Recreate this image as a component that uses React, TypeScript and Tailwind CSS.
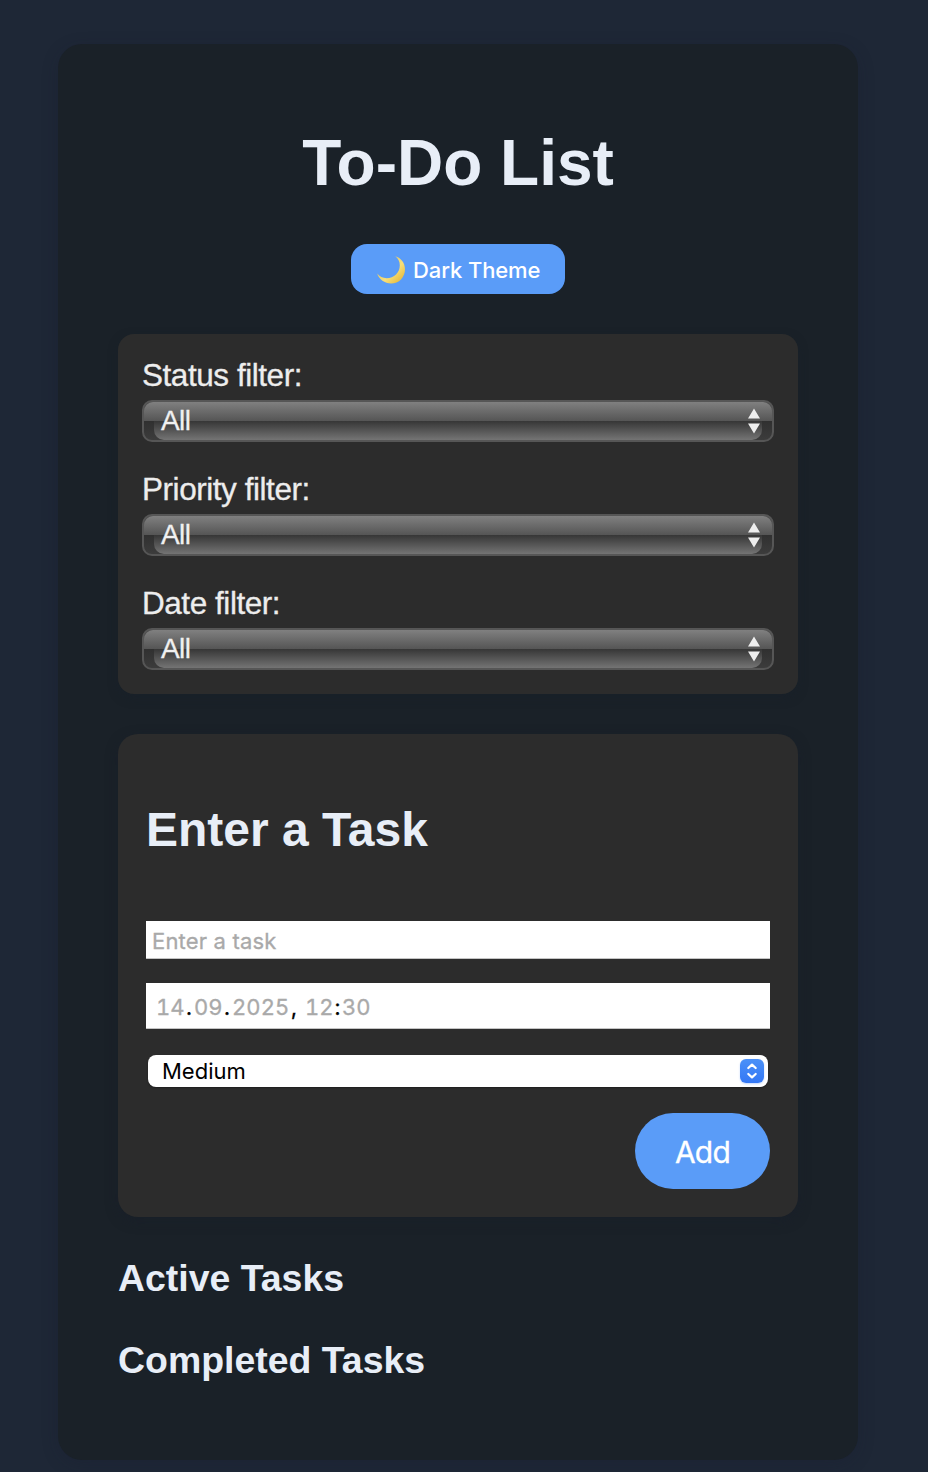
function Moon() {
  return (
    <svg className="h-[30px] w-[30px] shrink-0" viewBox="0 0 30 30">
      <defs>
        <linearGradient id="moon" x1="0" y1="0.2" x2="0.8" y2="1">
          <stop offset="0" stopColor="#d9bd62" />
          <stop offset="0.6" stopColor="#f7df79" />
          <stop offset="1" stopColor="#e5b93c" />
        </linearGradient>
      </defs>
      <path
        d="M19.2 2.2C25 3.8 29 8.9 29 15.2C29 23.2 23 29.5 15.2 29.5C8.7 29.5 3 25.6 1.2 19.6C3.6 22.6 6.8 24.2 10.6 24.2C18.2 24.2 23.8 18.6 23.8 11.2C23.8 7.5 22.2 4.4 19.2 2.2Z"
        fill="url(#moon)"
      />
    </svg>
  );
}

function FilterSelect({ label }: { label: string }) {
  return (
    <div className="flex h-[90px] flex-col">
      <span className="mt-[5px] h-[43px] text-[31.5px] leading-[36px] tracking-[-0.45px] text-[#ededed] [-webkit-text-stroke:0.3px_#ededed]">{label}</span>
      <button
        type="button"
        className="h-[42px] w-full shrink-0 rounded-[10px] border-2 border-[#565656] bg-[linear-gradient(to_bottom,#4b4b4b_0%,#404040_48%,#303030_50%,#3c3c3c_100%)] text-left"
      >
        <span className="relative flex h-full items-center justify-between rounded-t-[8px] pl-[17px] pr-3">
          <span className="absolute inset-x-0 top-0 h-[19px] rounded-t-[9px] bg-[linear-gradient(to_bottom,#808080,#555555)]" />
          <span className="absolute inset-x-[10px] bottom-0 top-[19px] rounded-b-[10px] bg-[linear-gradient(to_bottom,#363636,#747474)]" />
          <span className="relative text-[28px] leading-[30px] tracking-[-0.6px] text-[#f0f0f0] [-webkit-text-stroke:0.3px_#f0f0f0]">All</span>
          <svg className="relative -mt-px h-[26px] w-3" viewBox="0 0 12 26">
            <path d="M6 0.5L12 10.5H0ZM0 15.5H12L6 25.5Z" fill="#eeeeee" />
          </svg>
        </span>
      </button>
    </div>
  );
}

export default function App() {
  return (
    <div className="h-[1472px] w-[928px] overflow-hidden bg-[#1e2736] pl-[58px] pt-11 font-['Liberation_Sans',Arial,sans-serif]">
      <main className="flex h-[1416px] w-[800px] flex-col rounded-[24px] bg-[#1a2128] px-[60px] shadow-[0_4px_16px_rgba(24,29,48,0.25)]">
        <h1 className="mt-[82px] text-center text-[64px] font-bold leading-[74px] text-[#e8eef7]">To-Do List</h1>
        <button
          type="button"
          className="mt-11 flex h-[50px] w-[214px] shrink-0 items-center self-center rounded-[16px] bg-[#5a9cf8] pl-[25px] font-['Inter',sans-serif] text-[22px] font-medium text-white"
        >
          <Moon />
          <span className="ml-[7px] mt-[2px] whitespace-nowrap tracking-[-0.1px]">Dark Theme</span>
        </button>

        <section className="mt-10 flex h-[360px] shrink-0 flex-col gap-6 rounded-[16px] bg-[#2c2c2c] px-6 pt-[18px] shadow-[0_4px_10px_rgba(24,31,42,0.5)]">
          <FilterSelect label="Status filter:" />
          <FilterSelect label="Priority filter:" />
          <FilterSelect label="Date filter:" />
        </section>

        <section className="mt-10 flex h-[483px] shrink-0 flex-col rounded-[20px] bg-[#2c2c2c] px-7 shadow-[0_4px_12px_rgba(24,29,42,0.5)]">
          <h2 className="mt-[68px] text-[48px] font-bold leading-[56px] text-[#e8eef7]">Enter a Task</h2>
          <div className="mt-[63px] flex h-[38px] shrink-0 items-center border-b border-[#c4c4c4] bg-white pl-[6px] pt-[3px] font-['Inter',sans-serif] text-[22px] tracking-[0.17px] text-[#a9a9a9] [-webkit-text-stroke:0.3px_#a9a9a9]">
            Enter a task
          </div>
          <div className="mt-6 flex h-[46px] shrink-0 items-center border-b border-[#c4c4c4] bg-white pl-[10px] pt-[3px] font-['Inter',sans-serif] text-[22px] tabular-nums text-[#a9a9a9] [-webkit-text-stroke:0.3px]">
            <span className="w-[28px]">14</span>
            <span className="w-[10px] text-center text-black">.</span>
            <span className="w-[28px]">09</span>
            <span className="w-[10px] text-center text-black">.</span>
            <span className="w-[57px] tracking-[0.1px]">2025</span>
            <span className="w-[16px] pl-[2px] text-black">,</span>
            <span className="w-[28px]">12</span>
            <span className="w-[9px] text-center text-black">:</span>
            <span className="w-[28px]">30</span>
          </div>
          <button
            type="button"
            className="mx-[2px] mt-[26px] flex h-8 shrink-0 items-center justify-between rounded-[8px] bg-white pl-[14px] pr-1 font-['Inter',sans-serif] text-[22px] text-black shadow-[0_1px_2px_rgba(0,0,0,0.35)]"
          >
            <span>Medium</span>
            <svg
              className="h-6 w-6 rounded-[6px] bg-[linear-gradient(to_bottom,#4b91f8,#3377f5)] shadow-[0_1px_2px_rgba(51,119,245,0.3)]"
              viewBox="0 0 24 24"
              fill="none"
              stroke="white"
              strokeWidth="2.2"
              strokeLinecap="round"
              strokeLinejoin="round"
            >
              <path d="M8.3 9L12 5.6L15.7 9M8.3 15L12 18.4L15.7 15" />
            </svg>
          </button>
          <button
            type="button"
            className="mt-[26px] h-[76px] w-[135px] shrink-0 self-end rounded-[38px] bg-[#5a9cf8] pt-[2px] font-['Inter',sans-serif] text-[30px] tracking-[-0.8px] text-white [-webkit-text-stroke:0.3px_white]"
          >
            Add
          </button>
        </section>

        <h3 className="mt-10 text-[37.44px] font-bold leading-[42px] text-[#e8eef7]">Active Tasks</h3>
        <h3 className="mt-10 text-[37.44px] font-bold leading-[42px] text-[#e8eef7]">Completed Tasks</h3>
      </main>
    </div>
  );
}
